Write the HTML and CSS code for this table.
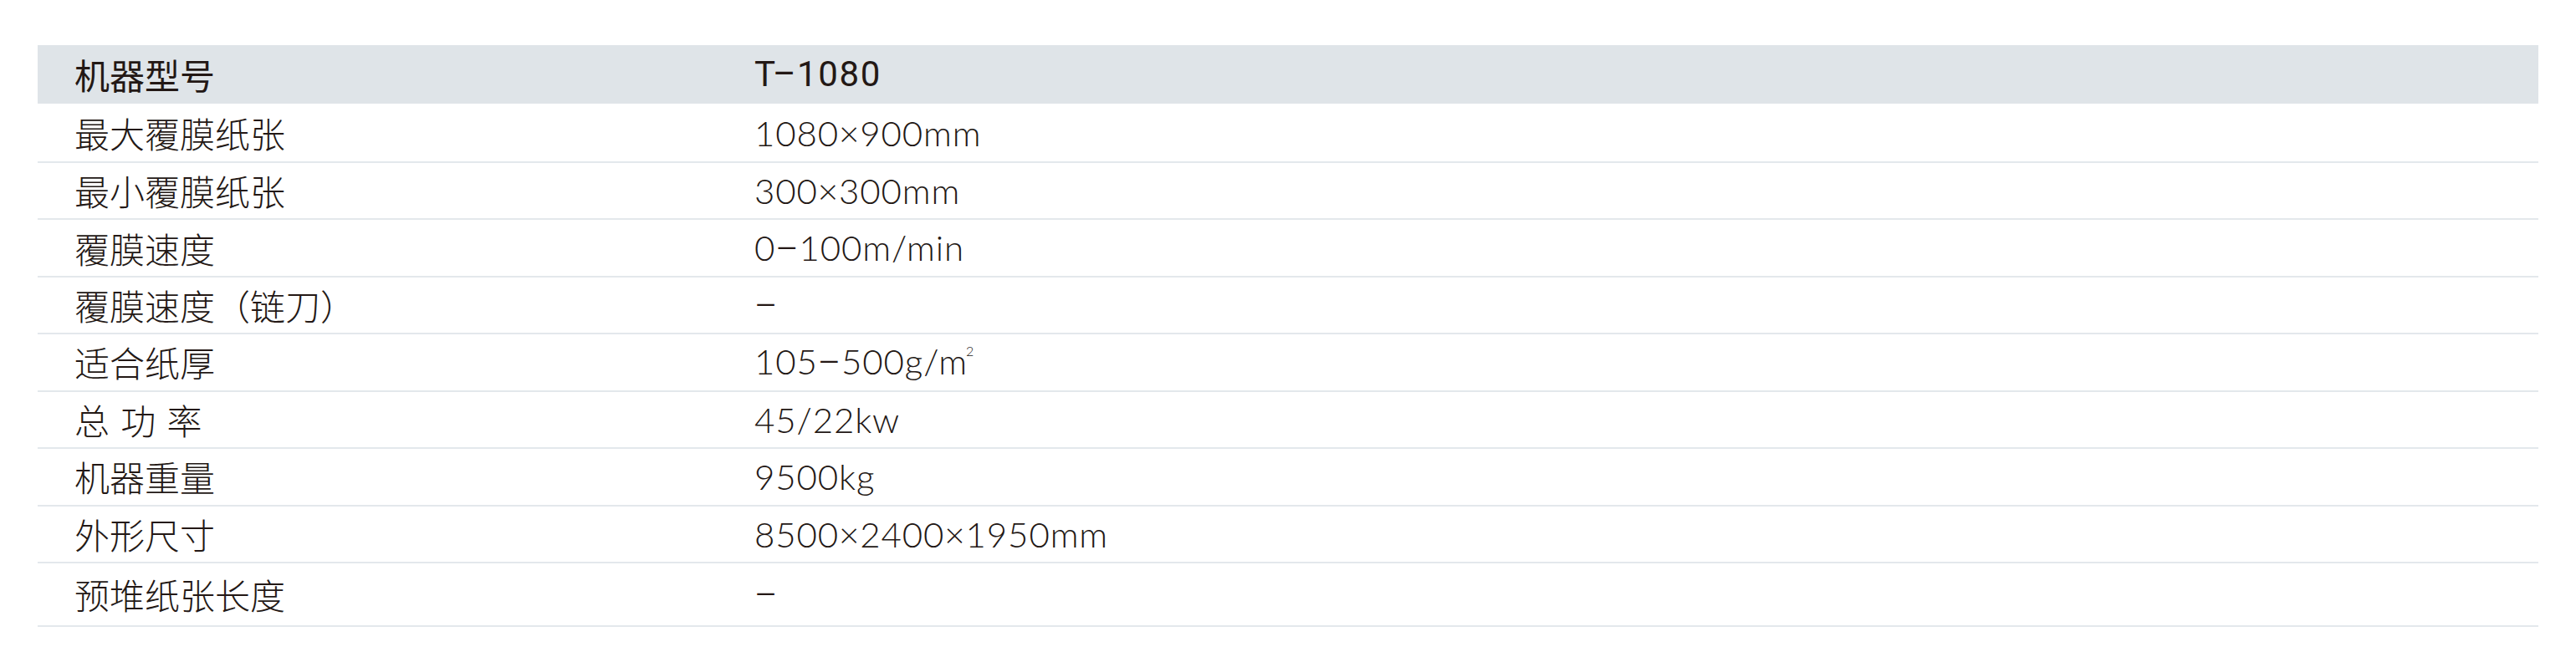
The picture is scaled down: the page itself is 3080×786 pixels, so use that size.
FILE: index.html
```html
<!DOCTYPE html>
<html lang="zh-CN">
<head>
<meta charset="utf-8">
<title>机器参数</title>
<link rel="stylesheet" href="styles.css">
</head>
<body>
<div class="spec">
  <div class="row head"><span class="label">机器型号</span><span class="value">T–1080</span></div>
  <div class="row first"><span class="label">最大覆膜纸张</span><span class="value">1080×900mm</span></div>
  <div class="row"><span class="label">最小覆膜纸张</span><span class="value">300×300mm</span></div>
  <div class="row"><span class="label">覆膜速度</span><span class="value">0<span class="dash">–</span>100m/min</span></div>
  <div class="row"><span class="label">覆膜速度（链刀）</span><span class="value"><span class="dash">–</span></span></div>
  <div class="row"><span class="label">适合纸厚</span><span class="value">105<span class="dash">–</span>500g/m<span class="sq">2</span></span></div>
  <div class="row"><span class="label spaced">总 功 率</span><span class="value">45/22kw</span></div>
  <div class="row"><span class="label">机器重量</span><span class="value">9500kg</span></div>
  <div class="row"><span class="label">外形尺寸</span><span class="value">8500×2400×1950mm</span></div>
  <div class="row last"><span class="label">预堆纸张长度</span><span class="value"><span class="dash">–</span></span></div>
</div>
</body>
</html>
```
FILE: styles.css
```css
html, body {
  margin: 0;
  background: #ffffff;
}
body {
  padding: 54px 45px 0;
  font-family: "Noto Sans CJK SC", sans-serif;
  color: #231815;
}
.spec {
  display: flex;
  flex-direction: column;
}
.row {
  display: grid;
  grid-template-columns: 813px 1fr;
  align-items: center;
  box-sizing: border-box;
  height: 68.43px;
  padding-left: 44px;
  border-bottom: 2px solid #e3e8ec;
  font-size: 42px;
  line-height: 1;
  font-weight: 300;
}
.row.head {
  height: 70px;
  background: #dfe4e8;
  border-bottom: none;
  font-weight: 400;
}
.row.first {
  height: 71px;
}
.row.last {
  height: 76.5px;
}
.label {
  font-family: "Noto Sans CJK SC", sans-serif;
  white-space: nowrap;
}
.label.spaced {
  word-spacing: 4px;
}
.value {
  font-family: "Lato", "Noto Sans CJK SC", sans-serif;
  white-space: nowrap;
  letter-spacing: 0.9px;
}
.head .value {
  font-family: "Roboto", "Noto Sans CJK SC", sans-serif;
  letter-spacing: 1.6px;
}
.dash {
  font-family: "Roboto", sans-serif;
  font-weight: 300;
}
.sq {
  font-size: 16px;
  letter-spacing: 0;
  vertical-align: 22px;
  margin-left: -2px;
}
```
